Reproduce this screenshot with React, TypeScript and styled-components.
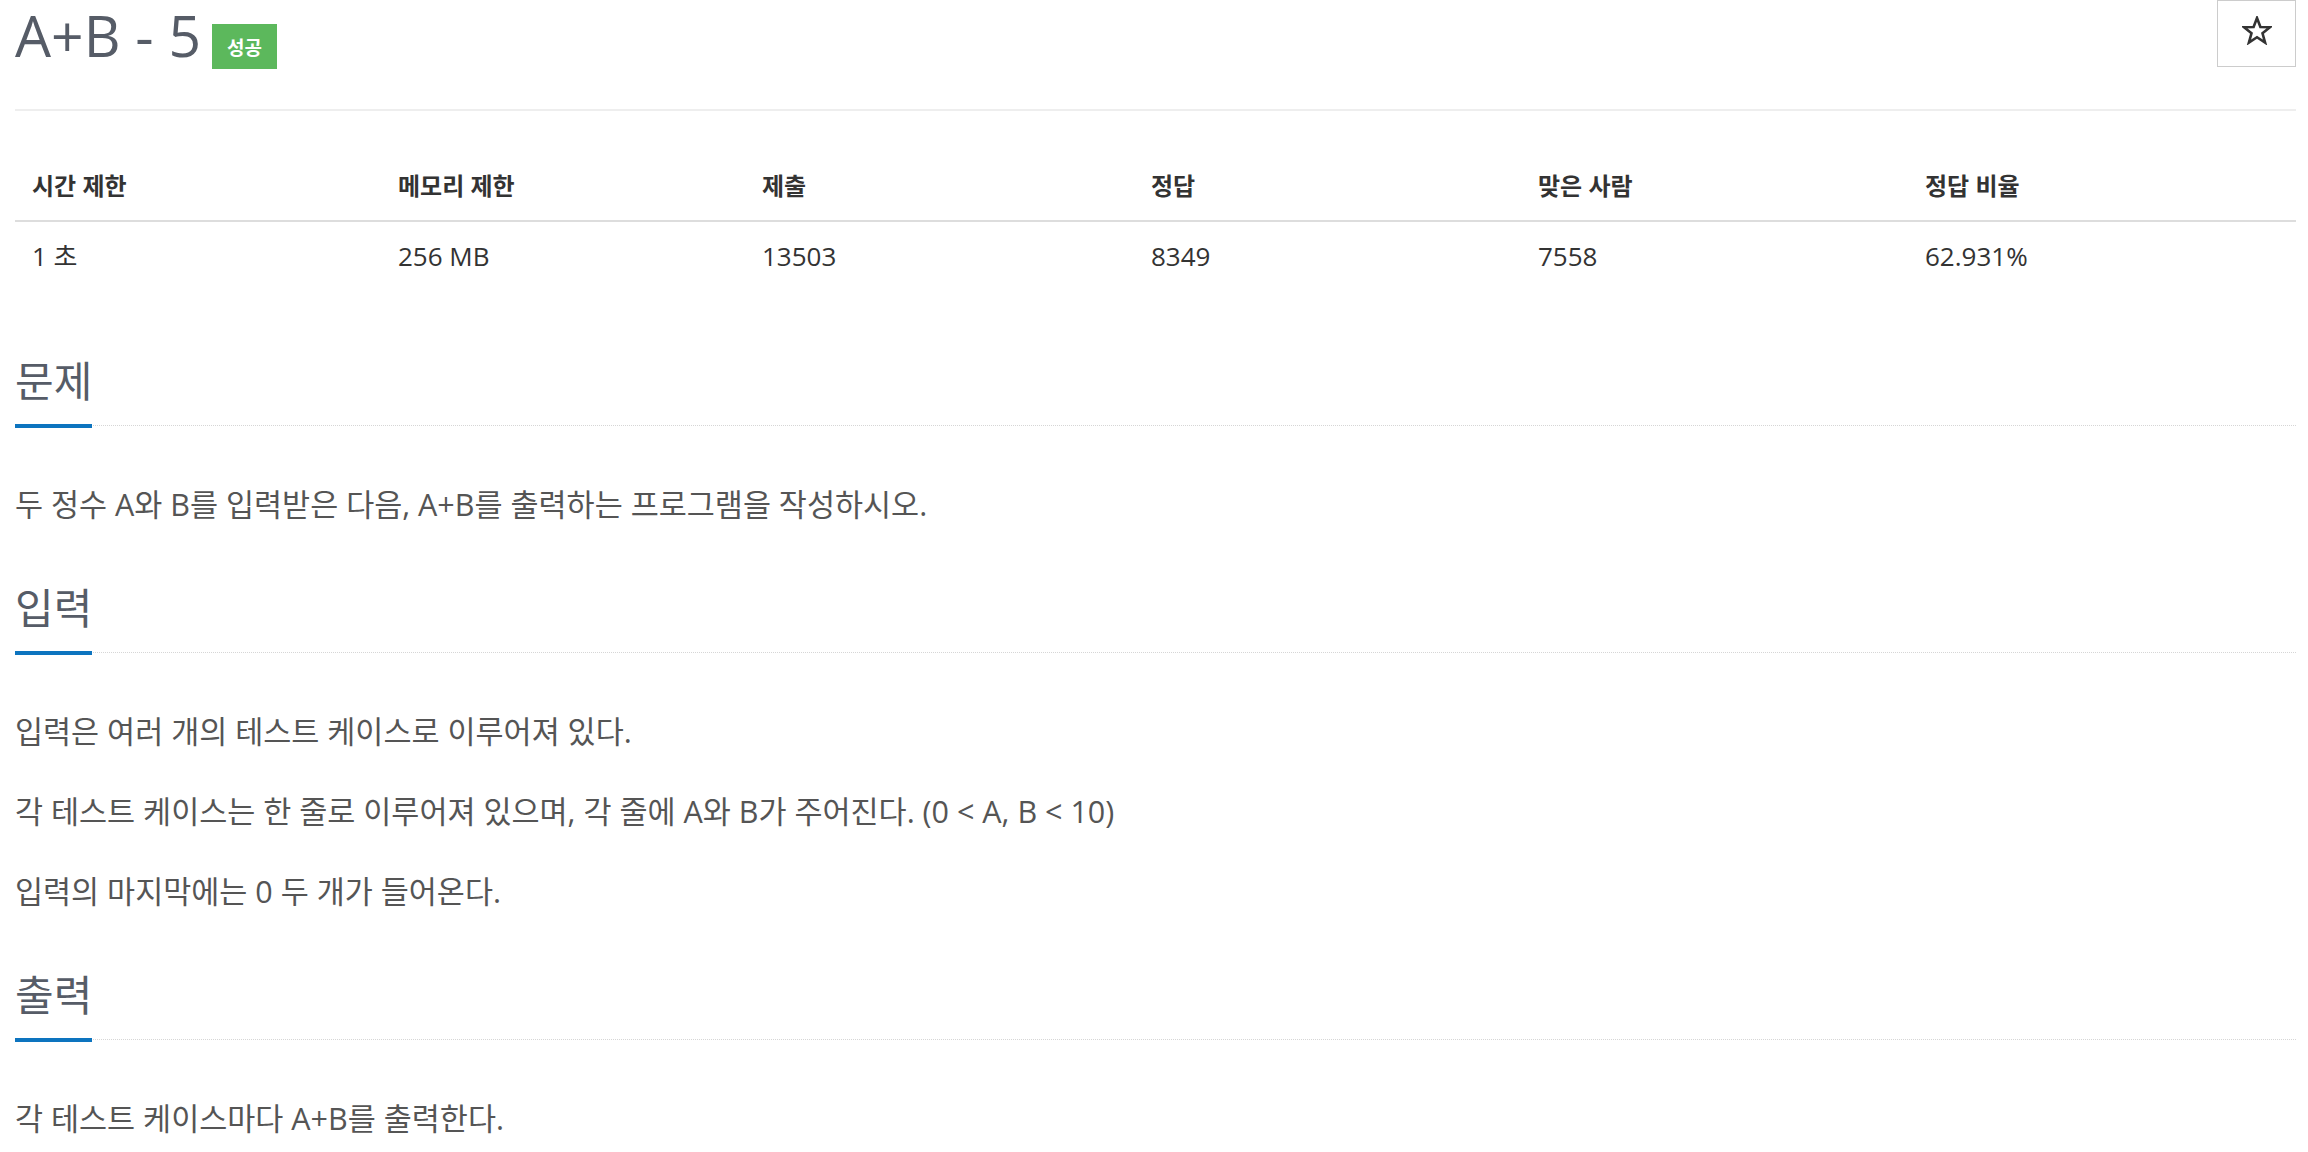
import styled, { createGlobalStyle } from "styled-components";

const GlobalStyle = createGlobalStyle`
  body {
    margin: 0;
    background: #fff;
    font-family: "Open Sans", "Noto Sans CJK KR", sans-serif;
  }
`;

const Page = styled.div`
  padding: 0 12px 0 15px;
`;

const Header = styled.div`
  display: flex;
  justify-content: space-between;
  align-items: flex-start;
  padding-bottom: 40px;
  border-bottom: 2px solid #eeeeee;
`;

const TitleGroup = styled.div`
  display: flex;
  align-items: flex-start;
  gap: 11px;
`;

const Title = styled.h1`
  margin: 3px 0 0;
  font-size: 57px;
  line-height: 64px;
  font-weight: 400;
  color: #565c67;
`;

const Badge = styled.span`
  margin-top: 24px;
  height: 45px;
  padding: 0 15px;
  display: inline-flex;
  align-items: center;
  background: #5cb85c;
  color: #fff;
  font-size: 19px;
  font-weight: 700;
`;

const StarButton = styled.button`
  width: 79px;
  height: 67px;
  padding: 0 0 6px;
  border: 1px solid #cccccc;
  background: #fff;
  display: flex;
  align-items: center;
  justify-content: center;
  cursor: pointer;
`;

const Table = styled.table`
  width: 100%;
  margin: 41px 0 70px;
  border-collapse: collapse;
  table-layout: fixed;
`;

const Col = styled.col<{ $w: number }>`
  width: ${(p) => p.$w}px;
`;

const Th = styled.th`
  padding: 18px 17px;
  line-height: 32px;
  font-size: 24px;
  font-weight: 700;
  color: #333;
  text-align: left;
  border-bottom: 2px solid #dddddd;
`;

const Td = styled.td`
  padding: 18px 17px;
  line-height: 32px;
  font-size: 26px;
  color: #333;
`;

const Section = styled.section`
  margin-top: 60px;
`;

const Headline = styled.div`
  display: flex;
  border-bottom: 1px dotted #d6d6d6;
`;

const HeadTitle = styled.h2`
  margin: 0 0 -3px;
  padding-bottom: 22px;
  font-size: 42px;
  line-height: 42px;
  font-weight: 400;
  color: #565c67;
  border-bottom: 4px solid #0d74bf;
`;

const Body = styled.div`
  margin-top: 56px;
`;

const Paragraph = styled.p`
  margin: 0 0 35px;
  font-size: 30.5px;
  line-height: 45px;
  color: #555;

  &:last-child {
    margin-bottom: 0;
  }
`;

const StarIcon = () => (
  <svg width="30" height="29" viewBox="0 0 30 29">
    <polygon
      points="15,2 18.4,11 28,11.3 20.5,17.3 23.1,26.6 15,21.2 6.9,26.6 9.5,17.3 2,11.3 11.6,11"
      fill="none"
      stroke="#333"
      strokeWidth="2.6"
      strokeLinejoin="miter"
    />
  </svg>
);

const columns = [
  { label: "시간 제한", value: "1 초", w: 366 },
  { label: "메모리 제한", value: "256 MB", w: 364 },
  { label: "제출", value: "13503", w: 389 },
  { label: "정답", value: "8349", w: 387 },
  { label: "맞은 사람", value: "7558", w: 387 },
  { label: "정답 비율", value: "62.931%", w: 388 },
];

const sections = [
  {
    title: "문제",
    lines: ["두 정수 A와 B를 입력받은 다음, A+B를 출력하는 프로그램을 작성하시오."],
  },
  {
    title: "입력",
    lines: [
      "입력은 여러 개의 테스트 케이스로 이루어져 있다.",
      "각 테스트 케이스는 한 줄로 이루어져 있으며, 각 줄에 A와 B가 주어진다. (0 < A, B < 10)",
      "입력의 마지막에는 0 두 개가 들어온다.",
    ],
  },
  {
    title: "출력",
    lines: ["각 테스트 케이스마다 A+B를 출력한다."],
  },
];

const App = () => {
  return (
    <Page>
      <GlobalStyle />
      <Header>
        <TitleGroup>
          <Title>A+B - 5</Title>
          <Badge>성공</Badge>
        </TitleGroup>
        <StarButton>
          <StarIcon />
        </StarButton>
      </Header>

      <Table>
        <colgroup>
          {columns.map((c) => (
            <Col key={c.label} $w={c.w} />
          ))}
        </colgroup>
        <thead>
          <tr>
            {columns.map((c) => (
              <Th key={c.label}>{c.label}</Th>
            ))}
          </tr>
        </thead>
        <tbody>
          <tr>
            {columns.map((c) => (
              <Td key={c.label}>{c.value}</Td>
            ))}
          </tr>
        </tbody>
      </Table>

      {sections.map((s) => (
        <Section key={s.title}>
          <Headline>
            <HeadTitle>{s.title}</HeadTitle>
          </Headline>
          <Body>
            {s.lines.map((line) => (
              <Paragraph key={line}>{line}</Paragraph>
            ))}
          </Body>
        </Section>
      ))}
    </Page>
  );
};

export default App;
